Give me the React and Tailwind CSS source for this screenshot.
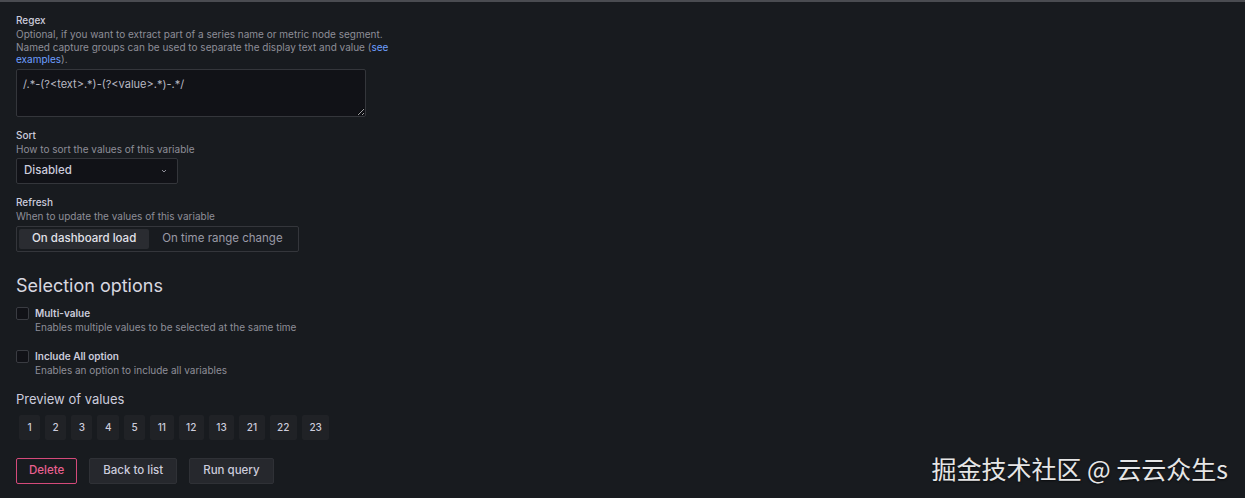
import React, { useState } from "react";

const values = ["1", "2", "3", "4", "5", "11", "12", "13", "21", "22", "23"];

const Field = ({ label, description, children }) => (
  <div className="flex flex-col">
    <div className="text-[10px] leading-[13px] font-medium text-[#ccccdc]">{label}</div>
    <div className="text-[10px] leading-[12.5px] text-[#8e8e98] mt-[1px]">{description}</div>
    <div className="mt-[3px]">{children}</div>
  </div>
);

const Check = ({ label, description }) => (
  <div className="flex items-start gap-[6px]">
    <div className="w-[13px] h-[13px] mt-0 rounded-[2px] border border-[#3a3c42] bg-[#111217]" />
    <div className="flex flex-col">
      <div className="text-[10px] leading-[13px] font-semibold text-[#ccccdc]">{label}</div>
      <div className="text-[10px] leading-[13px] text-[#8e8e98] mt-[1px]">{description}</div>
    </div>
  </div>
);

export default function App() {
  const [refresh, setRefresh] = useState("load");

  return (
    <div
      className="w-[1245px] h-[498px] bg-[#181b1f] border-t-2 border-[#4a4c51] relative overflow-hidden"
      style={{ fontFamily: "Inter, 'Noto Sans', sans-serif" }}
    >
      <div className="flex flex-col px-4 pt-[12px]">
        <div className="w-[385px]">
          <Field
            label="Regex"
            description={
              <>
                Optional, if you want to extract part of a series name or metric node segment. Named
                capture groups can be used to separate the display text and value (
                <span className="text-[#6e9fff]">see examples</span>).
              </>
            }
          >
            <textarea
              readOnly
              defaultValue="/.*-(?<text>.*)-(?<value>.*)-.*/"
              className="block w-[350px] h-[48px] bg-[#111217] border border-[#34363b] rounded-[2px] px-[6px] py-[7px] text-[11px] leading-[14px] text-[#b9b9c4] outline-none"
              style={{ fontFamily: "Inter, sans-serif" }}
            />
          </Field>
        </div>

        <div className="mt-[12px]">
          <Field label="Sort" description="How to sort the values of this variable">
            <div className="w-[162px] h-[26px] bg-[#111217] border border-[#34363b] rounded-[2px] flex items-center justify-between pl-[7px] pr-[9px]">
              <span className="text-[11.5px] font-medium text-[#ccccdc]">Disabled</span>
              <svg width="8" height="8" viewBox="0 0 24 24" fill="none" stroke="#8e8e98" strokeWidth="3">
                <path d="M6 9l6 6 6-6" />
              </svg>
            </div>
          </Field>
        </div>

        <div className="mt-[12px]">
          <Field label="Refresh" description="When to update the values of this variable">
            <div className="w-[283px] h-[26px] border border-[#34363b] rounded-[2px] flex items-center p-[2px] whitespace-nowrap">
              <button
                onClick={() => setRefresh("load")}
                className={`h-full px-[13px] rounded-[2px] text-[11.5px] font-medium whitespace-nowrap ${
                  refresh === "load" ? "bg-[#2a2c31] text-[#e2e2ea]" : "text-[#9a9aa6]"
                }`}
              >
                On dashboard load
              </button>
              <button
                onClick={() => setRefresh("time")}
                className={`h-full px-[13px] rounded-[2px] text-[11.5px] whitespace-nowrap ${
                  refresh === "time" ? "bg-[#2a2c31] text-[#e2e2ea] font-medium" : "text-[#9a9aa6]"
                }`}
              >
                On time range change
              </button>
            </div>
          </Field>
        </div>

        <h2 className="mt-[22px] text-[18px] leading-[24px] text-[#d8d8e0]">Selection options</h2>

        <div className="mt-[9px] flex flex-col gap-[16px]">
          <Check label="Multi-value" description="Enables multiple values to be selected at the same time" />
          <Check label="Include All option" description="Enables an option to include all variables" />
        </div>

        <h3 className="mt-[13px] text-[13px] leading-[18px] text-[#ccccdc]">Preview of values</h3>

        <div className="mt-[7px] flex gap-[5px] pl-[3px]">
          {values.map((v) => (
            <div
              key={v}
              className="h-[25px] min-w-[21px] px-[7.5px] bg-[#202226] rounded-[2px] flex items-center justify-center text-[10px] font-medium text-[#ccccdc]"
            >
              {v}
            </div>
          ))}
        </div>

        <div className="mt-[18px] flex gap-[12px]">
          <button className="h-[26px] px-[12px] border border-[#d44a7a] rounded-[2px] text-[11.5px] font-medium text-[#e9608f]">
            Delete
          </button>
          <button className="h-[26px] px-[13px] bg-[#26282d] border border-[#2f3136] rounded-[2px] text-[11.5px] font-medium text-[#ccccdc]">
            Back to list
          </button>
          <button className="h-[26px] px-[13px] bg-[#26282d] border border-[#2f3136] rounded-[2px] text-[11.5px] font-medium text-[#ccccdc]">
            Run query
          </button>
        </div>
      </div>

      <div
        className="absolute right-[17px] bottom-[15px] text-[25px] leading-[30px] text-[#e6e6e6]"
        style={{
          fontFamily: "'Noto Sans CJK SC', 'Noto Sans', sans-serif",
          textShadow: "0 1px 2px rgba(0,0,0,0.6)",
        }}
      >
        掘金技术社区 @ 云云众生s
      </div>
    </div>
  );
}
